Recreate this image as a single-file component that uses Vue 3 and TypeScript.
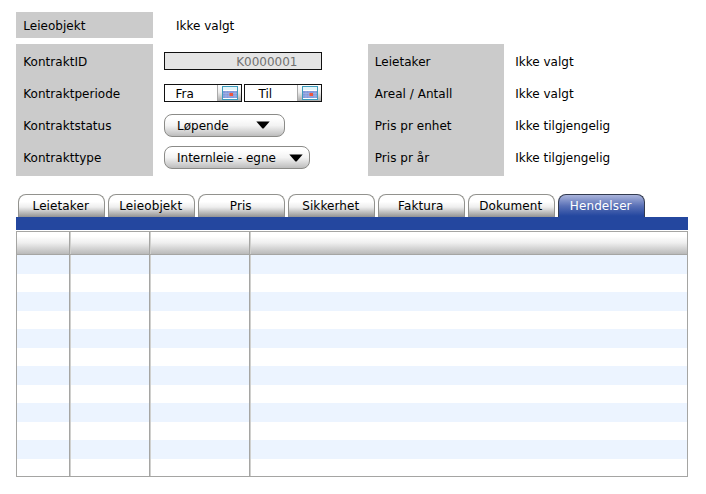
<script setup lang="ts">
const contractLabels: string[] = ['KontraktID', 'Kontraktperiode', 'Kontraktstatus', 'Kontrakttype']
const facts: { label: string; value: string }[] = [
  { label: 'Leietaker', value: 'Ikke valgt' },
  { label: 'Areal / Antall', value: 'Ikke valgt' },
  { label: 'Pris pr enhet', value: 'Ikke tilgjengelig' },
  { label: 'Pris pr år', value: 'Ikke tilgjengelig' },
]
const dates: string[] = ['Fra', 'Til']
const tabs: string[] = ['Leietaker', 'Leieobjekt', 'Pris', 'Sikkerhet', 'Faktura', 'Dokument', 'Hendelser']
const activeTab = 'Hendelser'
const rowCount = 12
const columnCount = 4
</script>

<template>
  <main class="page">
    <section class="object-row">
      <div class="label-panel single"><span>Leieobjekt</span></div>
      <span class="object-value">Ikke valgt</span>
    </section>

    <section class="details">
      <div class="label-panel">
        <span v-for="label in contractLabels" :key="label">{{ label }}</span>
      </div>
      <div class="controls">
        <div class="line"><div class="id-field">K0000001</div></div>
        <div class="line dates">
          <div v-for="d in dates" :key="d" class="date-field">
            <span>{{ d }}</span>
            <button class="calendar" type="button">
              <svg width="16" height="14" viewBox="0 0 16 14">
                <rect x=".5" y=".5" width="15" height="13" fill="#fff" stroke="#3d9cbd" />
                <rect x="1" y="1" width="14" height="3" fill="#e3f4f9" />
                <rect x="1" y="5" width="14" height="7" fill="#8398da" />
                <path d="M1 7.5H15M1 10H15M4 5V12M7 5V12M13 5V12" stroke="#a9b8e6" stroke-width=".6" />
                <rect x="7.5" y="7" width="3.5" height="3" fill="#f0563c" />
              </svg>
            </button>
          </div>
        </div>
        <div class="line">
          <button class="select status" type="button">
            <span>Løpende</span>
            <svg width="14" height="8" viewBox="0 0 14 8"><path d="M.3 .5H13.7L7.8 7.2Q7 8 6.2 7.2Z" /></svg>
          </button>
        </div>
        <div class="line">
          <button class="select type" type="button">
            <span>Internleie - egne</span>
            <svg width="14" height="8" viewBox="0 0 14 8"><path d="M.3 .5H13.7L7.8 7.2Q7 8 6.2 7.2Z" /></svg>
          </button>
        </div>
      </div>
      <div class="label-panel">
        <span v-for="fact in facts" :key="fact.label">{{ fact.label }}</span>
      </div>
      <div class="values">
        <span v-for="fact in facts" :key="fact.label">{{ fact.value }}</span>
      </div>
    </section>

    <nav class="tabs">
      <button v-for="tab in tabs" :key="tab" type="button" class="tab" :class="{ active: tab === activeTab }">
        {{ tab }}
      </button>
    </nav>
    <div class="tab-bar"></div>

    <div class="grid">
      <div class="grid-row head"><i v-for="c in columnCount" :key="c"></i></div>
      <div v-for="r in rowCount" :key="r" class="grid-row"><i v-for="c in columnCount" :key="c"></i></div>
    </div>
  </main>
</template>

<style>
body {
  background: #fff;
}
</style>

<style scoped>
.page {
  box-sizing: border-box;
  width: 706px;
  height: 494px;
  padding: 12px 0 0 16px;
  font: 12px/32px 'DejaVu Sans', sans-serif;
  color: #000;
  white-space: nowrap;
}
.page * {
  box-sizing: border-box;
}
button {
  font: inherit;
  letter-spacing: inherit;
  color: inherit;
  padding: 0;
  margin: 0;
}
.object-row {
  display: flex;
  height: 26px;
  line-height: 28px;
}
.object-value {
  margin-left: 23.5px;
}
.label-panel {
  display: flex;
  flex-direction: column;
  width: 136.5px;
  padding: 2px 0 0 7.3px;
  background: #cbcbcb;
  letter-spacing: .03px;
}
.single {
  padding-top: 0;
}
.details {
  display: flex;
  height: 132px;
  margin-top: 6px;
}
.controls {
  width: 215px;
  padding: 1px 0 0 11.5px;
}
.line {
  display: flex;
  align-items: center;
  height: 32px;
}
.id-field {
  width: 158px;
  height: 18px;
  padding-right: 23.5px;
  border: 1px solid #111;
  background: #e5e5e5;
  color: #707070;
  line-height: 18px;
  text-align: right;
}
.dates {
  gap: 2px;
}
.date-field {
  display: flex;
  justify-content: space-between;
  width: 78px;
  height: 18px;
  padding-left: 10.5px;
  border: 1px solid #111;
  line-height: 18px;
}
.date-field + .date-field {
  padding-left: 13.5px;
}
.calendar {
  display: flex;
  align-items: center;
  justify-content: center;
  width: 24px;
  height: 16px;
  border: 0;
  border-left: 1px solid #aaa;
  background: linear-gradient(#fff, #eee 45%, #aaa);
}
svg {
  flex: none;
}
.select {
  display: flex;
  align-items: center;
  justify-content: space-between;
  height: 23px;
  padding: 0 14px 0 12px;
  border: 1px solid #8b8b88;
  border-radius: 8px;
  background: linear-gradient(#fff 15%, #f3f3f3 50%, #bdbdbd);
  line-height: 20px;
}
.select span {
  padding-top: 2px;
}
.status {
  width: 120.5px;
}
.type {
  width: 146px;
  padding-right: 6.5px;
}
.type svg {
  margin-top: 2px;
}
.values {
  display: flex;
  flex-direction: column;
  padding: 2px 0 0 11.3px;
}
.tabs {
  display: flex;
  gap: 3.5px;
  height: 23px;
  margin: 18px 0 0 2px;
}
.tab {
  width: 86.5px;
  height: 23px;
  padding-right: 1px;
  border: 1px solid #92928e;
  border-bottom: 0;
  border-radius: 8px 8px 0 0;
  background: linear-gradient(#fff 30%, #eee 55%, #929292);
  letter-spacing: .1px;
  line-height: 21px;
}
.tab.active {
  border-color: #333b50;
  background: linear-gradient(#aab4dc, #5970b6 50%, #24479f 95%);
  color: #fff;
}
.tab-bar {
  width: 672px;
  height: 13px;
  background: #24479f;
}
.grid {
  width: 671.5px;
  height: 246px;
  margin-top: 1px;
  border: 1px solid #a5a5a3;
  overflow: hidden;
}
.grid-row {
  display: grid;
  grid-template-columns: 53px 80px 100px 1fr;
  height: 18.5px;
}
.grid-row:nth-child(even) {
  background: #ecf4ff;
}
.grid-row.head {
  height: 23px;
  border-bottom: 1px solid #a5a5a3;
  background: linear-gradient(#fff 20%, #eee 50%, #b9b9b9);
}
.grid-row i:not(:last-child) {
  border-right: 1px solid #a5a5a3;
  box-shadow: 1px 0 #d0d0ce;
}
</style>
